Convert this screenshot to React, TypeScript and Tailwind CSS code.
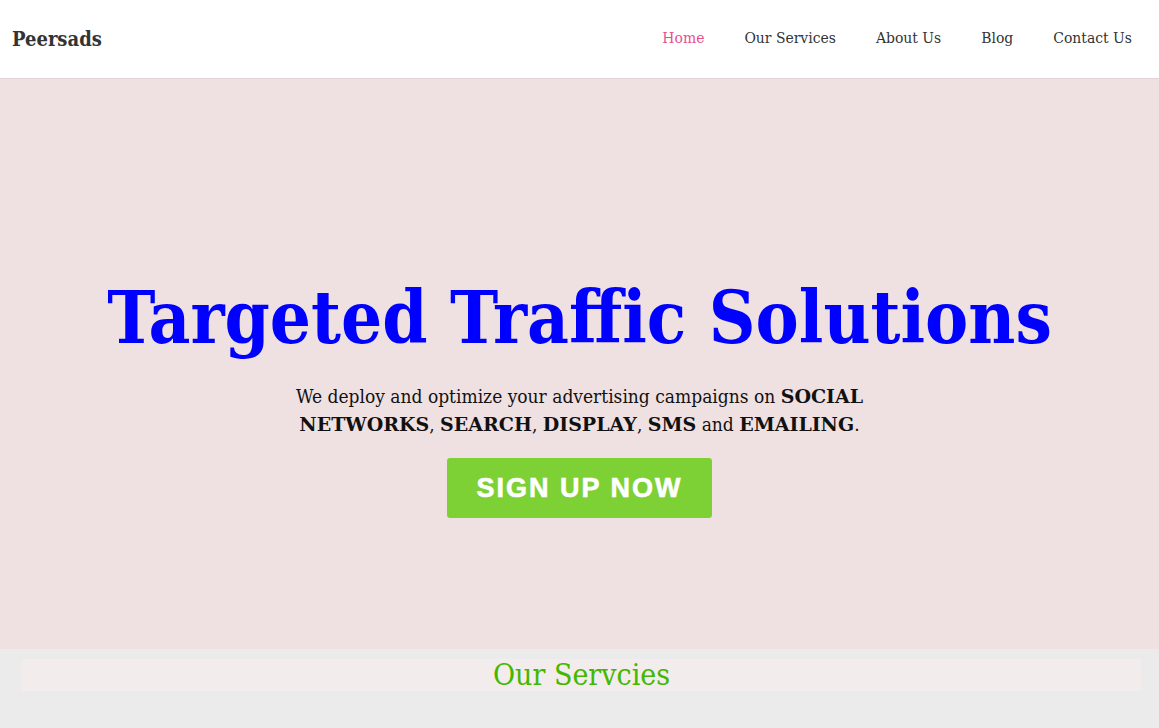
export default function App() {
  const serif = { fontFamily: "'DejaVu Serif Condensed', 'DejaVu Serif', Georgia, serif" };
  const strong = "font-bold font-['DejaVu_Serif',serif]";
  return (
    <div className="min-h-screen bg-[#ebebeb]" style={serif}>
      <header className="flex h-[79px] items-center justify-between border-b border-[#e3d3d4] bg-white pl-3 pr-[27px]">
        <a href="#" className="text-[20px] font-bold text-[#333]">Peersads</a>
        <nav className="flex items-center gap-10 text-[15.5px] text-[#333]">
          <a href="#" className="text-[#e6508f]">Home</a>
          <a href="#">Our Services</a>
          <a href="#">About Us</a>
          <a href="#">Blog</a>
          <a href="#">Contact Us</a>
        </nav>
      </header>

      <section className="flex h-[570px] flex-col items-center bg-[#efe0e1] pt-[196px] text-center">
        <h1 className="text-[72px] font-bold leading-[86px] text-[#0000ff]">Targeted Traffic Solutions</h1>
        <p className="mt-[21px] max-w-[600px] text-[19px] leading-[28px] text-[#111]">
          We deploy and optimize your advertising campaigns on <b className={strong}>SOCIAL NETWORKS</b>,{" "}
          <b className={strong}>SEARCH</b>, <b className={strong}>DISPLAY</b>, <b className={strong}>SMS</b> and{" "}
          <b className={strong}>EMAILING</b>.
        </p>
        <a
          href="#"
          className="mt-[20px] flex h-[60px] w-[265px] items-center justify-center rounded-[3px] bg-[#7ed134] text-[27px] font-black tracking-[2px] text-white [-webkit-text-stroke:0.6px_white]"
          style={{ fontFamily: "'Liberation Sans', Arial, sans-serif" }}
        >
          SIGN UP NOW
        </a>
      </section>

      <section className="pl-[22px] pr-[18px] pt-[10px] pb-10">
        <div className="bg-[#f2ecec] text-center">
          <h2 className="text-[30px] leading-[32px] text-[#44b700]">Our Servcies</h2>
        </div>
      </section>
    </div>
  );
}
